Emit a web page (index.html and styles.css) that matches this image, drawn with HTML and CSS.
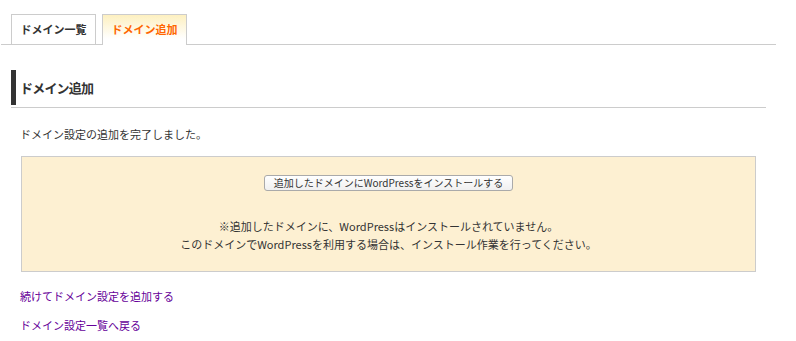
FILE: index.html
```html
<!DOCTYPE html>
<html lang="ja">
<head>
  <meta charset="UTF-8">
  <title>ドメイン追加</title>
  <link rel="stylesheet" href="styles.css">
</head>
<body>
  <div class="tabs">
    <a class="tab" href="#">ドメイン一覧</a>
    <a class="tab active" href="#">ドメイン追加</a>
  </div>

  <div class="content">
    <div class="page-title">
      <h2>ドメイン追加</h2>
    </div>

    <p class="message">ドメイン設定の追加を完了しました。</p>

    <div class="notice">
      <button type="button" class="wp-btn">追加したドメインにWordPressをインストールする</button>
      <p class="notice-text">※追加したドメインに、WordPressはインストールされていません。<br>
      このドメインでWordPressを利用する場合は、インストール作業を行ってください。</p>
    </div>

    <ul class="links">
      <li><a href="#">続けてドメイン設定を追加する</a></li>
      <li><a href="#">ドメイン設定一覧へ戻る</a></li>
    </ul>
  </div>
</body>
</html>
```

FILE: styles.css
```css
body {
  margin: 0;
  background: #fff;
  color: #333;
  font-family: "Noto Sans CJK JP", "Noto Sans", sans-serif;
  font-size: 11px;
}

.tabs {
  display: flex;
  gap: 6px;
  width: 765px;
  margin-left: 1px;
  padding: 14px 0 0 10px;
  border-bottom: 1px solid #ccc;
}

.tab {
  display: block;
  width: 83px;
  height: 29px;
  line-height: 29px;
  border: 1px solid #ccc;
  border-bottom: none;
  text-align: center;
  font-size: 11px;
  font-weight: bold;
  color: #333;
  text-decoration: none;
  background: #fff;
}

.tab.active {
  height: 30px;
  margin-bottom: -1px;
  color: #f60;
  background: linear-gradient(#fdf0c0, #fff 80%);
}

.content {
  padding: 25px 30px 0 11px;
}

.page-title {
  padding-bottom: 2px;
  border-bottom: 1px solid #ccc;
}

.page-title h2 {
  margin: 0;
  height: 35px;
  line-height: 35px;
  padding-left: 4px;
  border-left: 5px solid #333;
  font-size: 13px;
  font-weight: bold;
  letter-spacing: -0.8px;
  color: #333;
}

.message {
  margin: 18px 0 0 9px;
  line-height: 16px;
}

.notice {
  margin: 14px 0 0 10px;
  width: 733px;
  height: 114px;
  border: 1px solid #ccc;
  background: #fdf0d2;
  text-align: center;
}

.wp-btn {
  margin-top: 18px;
  height: 16px;
  padding: 0 9px;
  border: 1px solid #aaa;
  border-radius: 3px;
  background: linear-gradient(#fff, #f0f0f0);
  font-family: inherit;
  font-size: 10px;
  line-height: 14px;
  color: #333;
}

.notice-text {
  margin: 26px 0 0;
  line-height: 18px;
}

.links {
  list-style: none;
  margin: 16px 0 0 9px;
  padding: 0;
}

.links li {
  line-height: 16px;
  margin-bottom: 13px;
}

.links a {
  color: #609;
  text-decoration: none;
}
```
